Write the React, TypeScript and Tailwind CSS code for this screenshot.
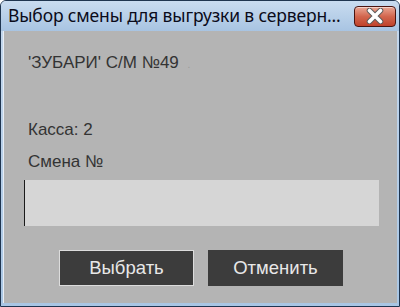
import React from "react";

function CloseButton() {
  return (
    <div className="w-[42px] h-[21px] rounded-[4px] border border-[#4a1410] bg-gradient-to-b from-[#e9a594] via-[#d2664e] to-[#c0412a] flex items-center justify-center shadow-[inset_0_1px_0_rgba(255,255,255,0.5)]">
      <svg width="20" height="16" viewBox="0 0 20 16">
        <path
          d="M4.5 2.5 L15.5 13.5 M15.5 2.5 L4.5 13.5"
          stroke="#5a5a5a"
          strokeWidth="5.5"
          strokeLinecap="round"
          fill="none"
        />
        <path d="M4.5 2.5 L15.5 13.5 M15.5 2.5 L4.5 13.5" stroke="#ffffff" strokeWidth="3.6" strokeLinecap="round" fill="none" />
      </svg>
    </div>
  );
}

export default function App() {
  return (
    <div className="w-[400px] h-[307px] flex flex-col bg-gradient-to-b from-[#c6d9ee] to-[#a9c6e4] border border-[#1f3550] rounded-t-[6px] overflow-hidden font-['Liberation_Sans',Arial,sans-serif]">
      <div className="h-[30px] flex items-center justify-between pl-[7px] pr-[3px] bg-gradient-to-b from-[#c9dcf0] to-[#a8c4e2]">
        <span className="font-['Noto_Sans',sans-serif] text-[17.5px] tracking-[-0.15px] text-[#0b0b1a] leading-none whitespace-nowrap">
          Выбор смены для выгрузки в серверн...
        </span>
        <CloseButton />
      </div>
      <div className="flex-1 mx-[2px] mb-[3px] bg-[#b4b4b4] flex flex-col pl-[24px] pr-[20px] pt-[23px] text-[#333333] text-[17px] leading-none border-l border-[#e8eef6]">
        <div className="h-[17px] whitespace-nowrap">
          'ЗУБАРИ' С/М №49 <span className="ml-[4px] text-[#9a9a9a] text-[10px]">.</span>
        </div>
        <div className="mt-[50px] h-[17px]">Касса: 2</div>
        <div className="mt-[15px] h-[17px]">Смена №</div>
        <div className="mt-[10px] -ml-[4px] h-[46px] w-[355px] bg-[#d6d6d6] border-l border-[#1a1a1a]" />
        <div className="mt-[24px] flex gap-[14px] pl-[31px]">
          <button className="w-[135px] h-[36px] bg-[#3c3c3c] border border-[#dcdcdc] text-[#e8e8e8] text-[18.5px] leading-none">
            Выбрать
          </button>
          <button className="w-[135px] h-[36px] bg-[#3c3c3c] text-[#e8e8e8] text-[18.5px] leading-none">
            Отменить
          </button>
        </div>
      </div>
    </div>
  );
}
